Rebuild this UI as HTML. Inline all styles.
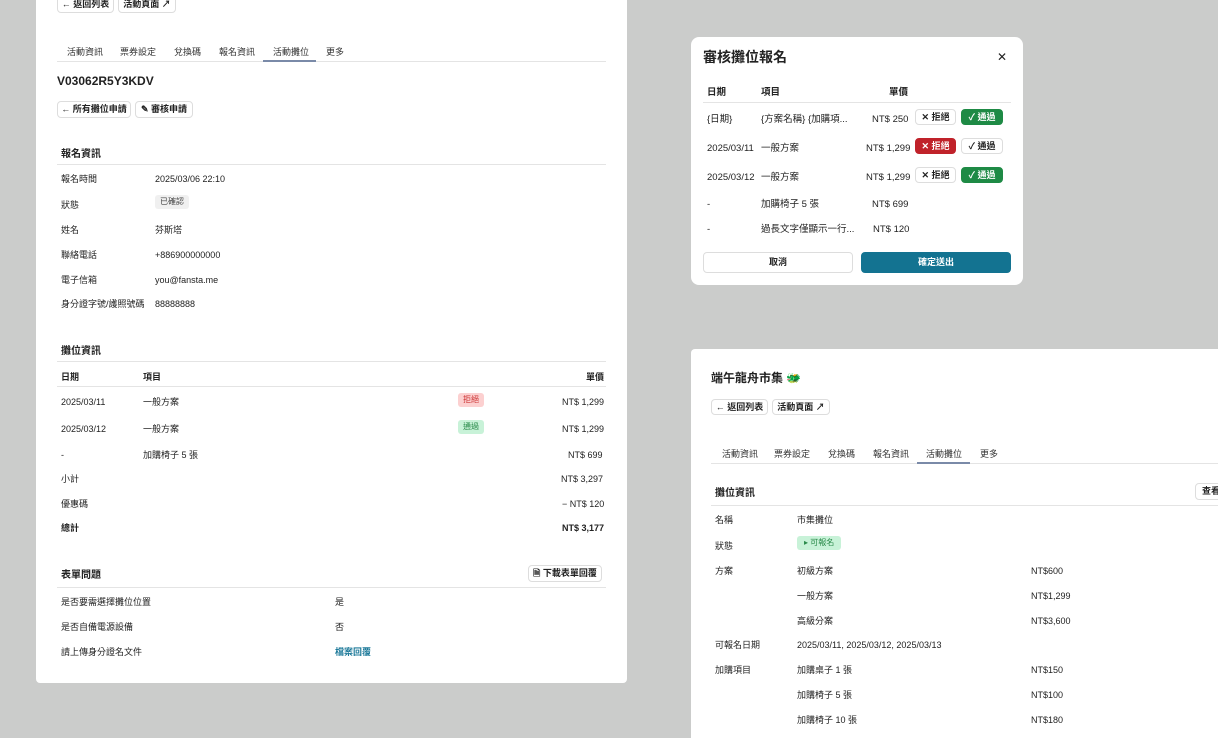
<!DOCTYPE html>
<html><head><meta charset="utf-8"><style>
*{box-sizing:border-box;margin:0;padding:0}
body{width:1218px;height:738px;background:#cbcccb;position:relative;overflow:hidden;font-family:"Liberation Sans","Noto Sans CJK TC",sans-serif;font-size:9px;line-height:11px;color:#222}
.p{position:absolute;background:#fff}
.a{position:absolute;white-space:nowrap;line-height:11px;margin-top:3px}
.n{margin-top:0}
.b{font-weight:bold}
.btn{position:absolute;border:1px solid #ddd;border-radius:4px;background:#fff;font-weight:bold;font-size:9px;line-height:11px;display:flex;align-items:center;justify-content:center;gap:5px;white-space:nowrap}
.hl{position:absolute;height:1px;background:#e4e4e4}
.tab{position:absolute;font-size:9px;line-height:11px;color:#333;margin-top:3px}
.tag{position:absolute;font-size:8px;line-height:10px;border-radius:3px;padding:2px 5px}
.m{font-size:9.5px}
</style></head><body>

<!-- Left panel -->
<div class="p" style="left:36px;top:0;width:591px;height:683px;border-radius:0 0 4px 4px"></div>
<div class="btn" style="left:57px;top:-4px;width:57px;height:17px">← 返回列表</div>
<div class="btn" style="left:118px;top:-4px;width:58px;height:17px">活動頁面 ↗</div>
<div class="tab" style="left:67px;top:44px">活動資訊</div>
<div class="tab" style="left:120px;top:44px">票券設定</div>
<div class="tab" style="left:174px;top:44px">兌換碼</div>
<div class="tab" style="left:219px;top:44px">報名資訊</div>
<div class="tab" style="left:273px;top:44px">活動攤位</div>
<div class="tab" style="left:326px;top:44px">更多</div>
<div class="hl" style="left:57px;top:61px;width:549px"></div>
<div class="a n" style="left:263px;top:60px;width:53px;height:2px;background:#7a8aa8"></div>
<div class="a b n" style="left:57px;top:74px;font-size:12px;line-height:14px">V03062R5Y3KDV</div>
<div class="btn" style="left:57px;top:101px;width:74px;height:17px">← 所有攤位申請</div>
<div class="btn" style="left:135px;top:101px;width:58px;height:17px">✎ 審核申請</div>

<div class="a b" style="left:61px;top:146px;font-size:10px;line-height:12px">報名資訊</div>
<div class="hl" style="left:57px;top:164px;width:549px"></div>
<div class="a" style="left:61px;top:171px">報名時間</div><div class="a" style="left:155px;top:171px">2025/03/06 22:10</div>
<div class="a" style="left:61px;top:197px">狀態</div><div class="tag" style="left:155px;top:195px;background:#f0f0f0;color:#444">已確認</div>
<div class="a" style="left:61px;top:222px">姓名</div><div class="a" style="left:155px;top:222px">芬斯塔</div>
<div class="a" style="left:61px;top:247px">聯絡電話</div><div class="a" style="left:155px;top:247px">+886900000000</div>
<div class="a" style="left:61px;top:272px">電子信箱</div><div class="a" style="left:155px;top:272px">you@fansta.me</div>
<div class="a" style="left:61px;top:296px">身分證字號/護照號碼</div><div class="a" style="left:155px;top:296px">88888888</div>

<div class="a b" style="left:61px;top:343px;font-size:10px;line-height:12px">攤位資訊</div>
<div class="hl" style="left:57px;top:361px;width:549px"></div>
<div class="a b" style="left:61px;top:369px">日期</div><div class="a b" style="left:143px;top:369px">項目</div><div class="a b" style="left:586px;top:369px">單價</div>
<div class="hl" style="left:57px;top:386px;width:549px"></div>
<div class="a" style="left:61px;top:394px">2025/03/11</div><div class="a" style="left:143px;top:394px">一般方案</div><div class="tag" style="left:458px;top:393px;background:#fcd0d0;color:#c33">拒絕</div><div class="a" style="left:562px;top:394px">NT$ 1,299</div>
<div class="a" style="left:61px;top:421px">2025/03/12</div><div class="a" style="left:143px;top:421px">一般方案</div><div class="tag" style="left:458px;top:420px;background:#c8f2d8;color:#2a8a4a">通過</div><div class="a" style="left:562px;top:421px">NT$ 1,299</div>
<div class="a" style="left:61px;top:447px">-</div><div class="a" style="left:143px;top:447px">加購椅子 5 張</div><div class="a" style="left:568px;top:447px">NT$ 699</div>
<div class="a" style="left:61px;top:471px">小計</div><div class="a" style="left:561px;top:471px">NT$ 3,297</div>
<div class="a" style="left:61px;top:496px">優惠碼</div><div class="a" style="left:562px;top:496px">− NT$ 120</div>
<div class="a b" style="left:61px;top:520px">總計</div><div class="a b" style="left:562px;top:520px">NT$ 3,177</div>

<div class="a b" style="left:61px;top:567px;font-size:10px;line-height:12px">表單問題</div>
<div class="btn" style="left:528px;top:565px;width:74px;height:17px">🗎 下載表單回覆</div>
<div class="hl" style="left:57px;top:587px;width:549px"></div>
<div class="a" style="left:61px;top:594px">是否要需選擇攤位位置</div><div class="a" style="left:335px;top:594px">是</div>
<div class="a" style="left:61px;top:619px">是否自備電源設備</div><div class="a" style="left:335px;top:619px">否</div>
<div class="a" style="left:61px;top:644px">請上傳身分證名文件</div><div class="a b" style="left:335px;top:644px;color:#1e7a9a">檔案回覆</div>

<!-- Modal -->
<div class="p" style="left:691px;top:37px;width:332px;height:248px;border-radius:8px"></div>
<div class="a b n" style="left:703px;top:49px;font-size:14px;line-height:17px">審核攤位報名</div>
<div class="a n" style="left:997px;top:50px;font-size:12px;line-height:14px">✕</div>
<div class="a b m" style="left:707px;top:84px">日期</div><div class="a b m" style="left:761px;top:84px">項目</div><div class="a b m" style="left:889px;top:84px">單價</div>
<div class="hl" style="left:703px;top:102px;width:308px"></div>
<div class="a m" style="left:707px;top:111px">{日期}</div><div class="a m" style="left:761px;top:111px">{方案名稱} {加購項...</div><div class="a m" style="left:872px;top:111px">NT$ 250</div>
<div class="btn" style="left:915px;top:109px;width:41px;height:16px">✕ 拒絕</div>
<div class="btn" style="left:961px;top:109px;width:42px;height:16px;background:#1e8a45;color:#fff;border-color:#1e8a45">✓ 通過</div>
<div class="a m" style="left:707px;top:140px">2025/03/11</div><div class="a m" style="left:761px;top:140px">一般方案</div><div class="a m" style="left:866px;top:140px">NT$ 1,299</div>
<div class="btn" style="left:915px;top:138px;width:41px;height:16px;background:#c0222a;color:#fff;border-color:#c0222a">✕ 拒絕</div>
<div class="btn" style="left:961px;top:138px;width:42px;height:16px">✓ 通過</div>
<div class="a m" style="left:707px;top:169px">2025/03/12</div><div class="a m" style="left:761px;top:169px">一般方案</div><div class="a m" style="left:866px;top:169px">NT$ 1,299</div>
<div class="btn" style="left:915px;top:167px;width:41px;height:16px">✕ 拒絕</div>
<div class="btn" style="left:961px;top:167px;width:42px;height:16px;background:#1e8a45;color:#fff;border-color:#1e8a45">✓ 通過</div>
<div class="a m" style="left:707px;top:196px">-</div><div class="a m" style="left:761px;top:196px">加購椅子 5 張</div><div class="a m" style="left:872px;top:196px">NT$ 699</div>
<div class="a m" style="left:707px;top:221px">-</div><div class="a m" style="left:761px;top:221px">過長文字僅顯示一行...</div><div class="a m" style="left:873px;top:221px">NT$ 120</div>
<div class="btn" style="left:703px;top:252px;width:150px;height:21px">取消</div>
<div class="btn" style="left:861px;top:252px;width:150px;height:21px;background:#137391;color:#fff;border-color:#137391">確定送出</div>

<!-- Bottom right panel -->
<div class="p" style="left:691px;top:349px;width:527px;height:389px;border-radius:4px 0 0 0"></div>
<div class="a b n" style="left:711px;top:371px;font-size:12px;line-height:15px">端午龍舟市集 <span style="color:#7a9a20">🐲</span></div>
<div class="btn" style="left:711px;top:399px;width:57px;height:16px">← 返回列表</div>
<div class="btn" style="left:772px;top:399px;width:58px;height:16px">活動頁面 ↗</div>
<div class="tab" style="left:722px;top:446px">活動資訊</div>
<div class="tab" style="left:774px;top:446px">票券設定</div>
<div class="tab" style="left:828px;top:446px">兌換碼</div>
<div class="tab" style="left:873px;top:446px">報名資訊</div>
<div class="tab" style="left:926px;top:446px">活動攤位</div>
<div class="tab" style="left:980px;top:446px">更多</div>
<div class="hl" style="left:711px;top:463px;width:507px"></div>
<div class="a n" style="left:917px;top:462px;width:53px;height:2px;background:#7a8aa8"></div>
<div class="a b" style="left:715px;top:485px;font-size:10px;line-height:12px">攤位資訊</div>
<div class="btn" style="left:1195px;top:483px;width:40px;height:17px;justify-content:flex-start;padding-left:6px">查看</div>
<div class="hl" style="left:711px;top:505px;width:507px"></div>
<div class="a" style="left:715px;top:512px">名稱</div><div class="a" style="left:797px;top:512px">市集攤位</div>
<div class="a" style="left:715px;top:538px">狀態</div><div class="tag" style="left:797px;top:536px;background:#c8f2d8;color:#2a8a4a;padding:2px 7px">▸ 可報名</div>
<div class="a" style="left:715px;top:563px">方案</div><div class="a" style="left:797px;top:563px">初級方案</div><div class="a" style="left:1031px;top:563px">NT$600</div>
<div class="a" style="left:797px;top:588px">一般方案</div><div class="a" style="left:1031px;top:588px">NT$1,299</div>
<div class="a" style="left:797px;top:613px">高級分案</div><div class="a" style="left:1031px;top:613px">NT$3,600</div>
<div class="a" style="left:715px;top:637px">可報名日期</div><div class="a" style="left:797px;top:637px">2025/03/11, 2025/03/12, 2025/03/13</div>
<div class="a" style="left:715px;top:662px">加購項目</div><div class="a" style="left:797px;top:662px">加購桌子 1 張</div><div class="a" style="left:1031px;top:662px">NT$150</div>
<div class="a" style="left:797px;top:687px">加購椅子 5 張</div><div class="a" style="left:1031px;top:687px">NT$100</div>
<div class="a" style="left:797px;top:712px">加購椅子 10 張</div><div class="a" style="left:1031px;top:712px">NT$180</div>
</body></html>
